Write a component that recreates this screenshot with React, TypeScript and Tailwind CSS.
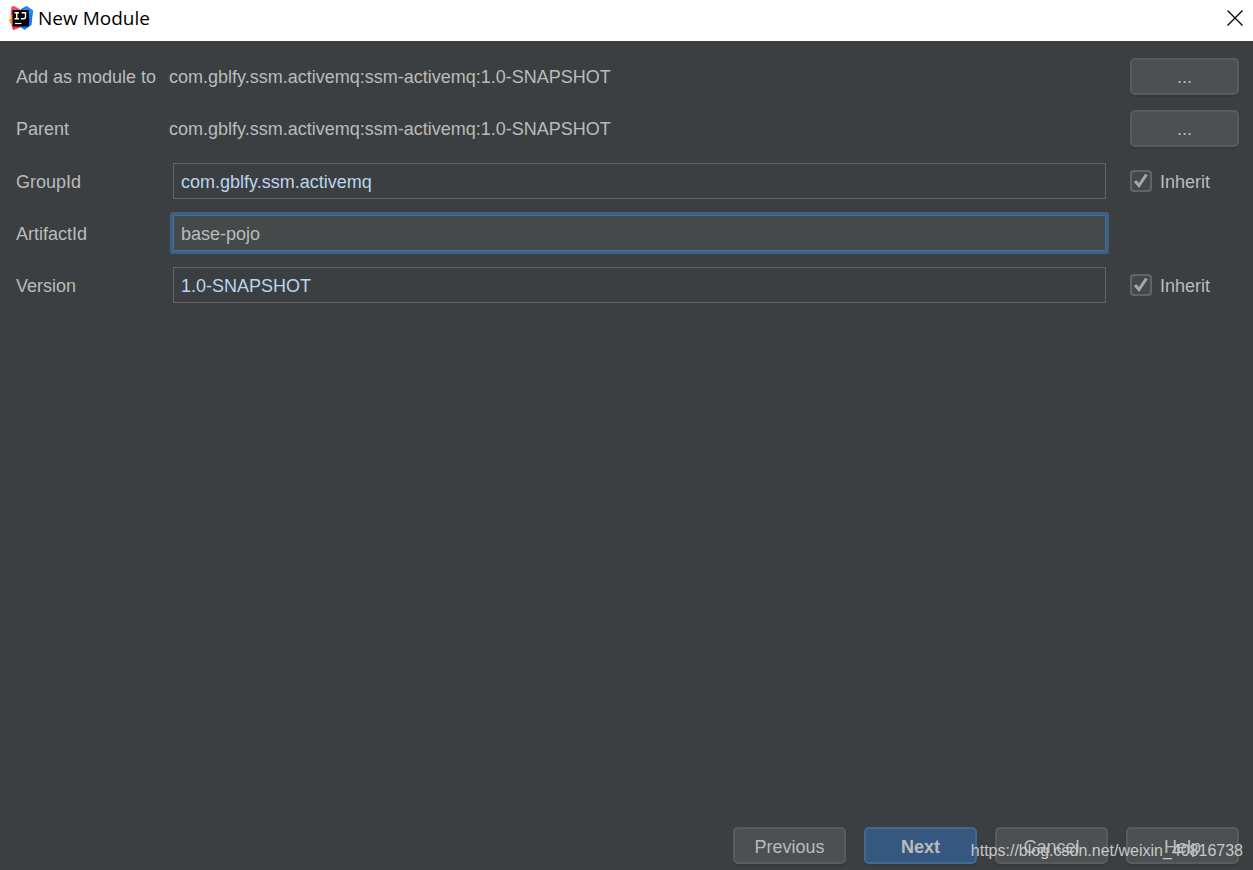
import React, { useState } from "react";

const PROJECT = "com.gblfy.ssm.activemq:ssm-activemq:1.0-SNAPSHOT";

const defaultModule = {
  groupId: "com.gblfy.ssm.activemq",
  artifactId: "base-pojo",
  version: "1.0-SNAPSHOT",
};

function Logo() {
  return (
    <svg className="size-6 shrink-0" viewBox="0 0 24 24" aria-hidden="true">
      <path d="M12 3 17.500 0 24 4.500 22.500 19 15.500 24 10 20z" fill="#087cfa" />
      <path d="M17.500 0 24 4.500 23.500 9 14 4z" fill="#1a8df8" />
      <path d="M2.500 0.500 5 0 14 5 12 21 4 24 2.500 19 4 12 1.500 8z" fill="#fe4468" />
      <path d="M1.500 9 5 11v8.500l-3-1L0 14.500l1.500-2z" fill="#fc8a35" />
      <path d="M3 19.500h12l-3 1.500-8 3z" fill="#fe315d" />
      <path d="M3.500 4h16.500v16.500h-16.500z" fill="#000" />
      <path
        d="M5.500 6.700h4.500M7.750 6.700v6M5.500 12.700h4.500M12.500 6.700h4v4q0 2-2 2h-2.500"
        fill="none"
        stroke="#fff"
        strokeWidth="1.400"
      />
      <path d="M6 17.500h6.500" stroke="#fff" strokeWidth="1.200" />
    </svg>
  );
}

function Button({
  children,
  className = "w-[113px]",
  primary = false,
  label,
}: {
  children: React.ReactNode;
  className?: string;
  primary?: boolean;
  label?: string;
}) {
  return (
    <button
      type="button"
      aria-label={label}
      className={`h-[37px] shrink-0 rounded-[5px] border-2 pt-0.5 shadow-[0_2px_1px_#36393b] ${
        primary
          ? "border-[#43698e] bg-[#365880] font-bold"
          : "border-[#585c5c] bg-[#4c5052]"
      } ${className}`}
    >
      {children}
    </button>
  );
}

function ProjectRow({ label }: { label: string }) {
  return (
    <div className="flex h-9 items-center">
      <span className="w-[153px] shrink-0 pt-0.5">{label}</span>
      <span className="flex-1 pt-0.5">{PROJECT}</span>
      <Button className="w-[109px]" label={`Choose ${label}`}>
        ...
      </Button>
    </div>
  );
}

function Inherit({ id }: { id: string }) {
  const [checked, setChecked] = useState(true);

  return (
    <label htmlFor={id} className="flex items-center gap-2">
      <span className="grid place-items-center">
        <input
          id={id}
          type="checkbox"
          checked={checked}
          onChange={({ target }) => setChecked(target.checked)}
          className="col-start-1 row-start-1 size-[22px] appearance-none rounded-[4px] border-2 border-[#626566] bg-[#43494a]"
        />
        {checked && (
          <svg
            className="pointer-events-none col-start-1 row-start-1 size-[22px]"
            viewBox="0 0 22 22"
            aria-hidden="true"
          >
            <path
              d="M5 11 9 15.500 16.500 4.500"
              fill="none"
              stroke="#a7a7a7"
              strokeWidth="3"
            />
          </svg>
        )}
      </span>
      <span className="pt-0.5">Inherit</span>
    </label>
  );
}

function FieldRow({
  id,
  label,
  value,
  onChange,
  active = false,
  inherit = false,
}: {
  id: string;
  label: string;
  value: string;
  onChange: (value: string) => void;
  active?: boolean;
  inherit?: boolean;
}) {
  return (
    <div className="flex h-9 items-center">
      <label htmlFor={id} className="w-[157px] shrink-0 pt-0.5">
        {label}
      </label>
      <input
        id={id}
        type="text"
        value={value}
        onChange={({ target }) => onChange(target.value)}
        className={`h-9 min-w-0 flex-1 px-[7px] pt-0.5 outline-none ${
          active
            ? "rounded-[1px] border border-[#466d94] bg-[#45494a] ring-3 ring-[#3d6185]"
            : "border border-[#646464] text-[#bbd5ee]"
        }`}
      />
      <div className="ml-6 w-[109px] shrink-0">
        {inherit && <Inherit id={`${id}-inherit`} />}
      </div>
    </div>
  );
}

export default function App() {
  const [module, setModule] = useState(defaultModule);

  return (
    <div className="relative flex min-h-screen flex-col bg-[#3c3f41] font-['Liberation_Sans',Arial,sans-serif] text-[18px] leading-6 text-[#bbbbbb]">
      <header className="flex h-[41px] items-center bg-white pr-[9px] pb-[5px] pl-[9px] text-black">
        <Logo />
        <h1 className="ml-[5px] flex-1 font-['Open_Sans','Segoe_UI',sans-serif] text-[19px]">
          New Module
        </h1>
        <button type="button" aria-label="Close">
          <svg className="size-[18px]" viewBox="0 0 18 18">
            <path
              d="M1.500 1.500l15 15M16.500 1.500l-15 15"
              stroke="#000"
              strokeWidth="1.300"
            />
          </svg>
        </button>
      </header>

      <main className="flex flex-1 flex-col gap-[17px] pt-[17px] pr-3.5 pl-4">
        <div className="flex flex-col gap-4">
          <ProjectRow label="Add as module to" />
          <ProjectRow label="Parent" />
        </div>
        <form className="flex flex-col gap-4">
          <FieldRow
            id="groupId"
            label="GroupId"
            value={module.groupId}
            onChange={(groupId) => setModule({ ...module, groupId })}
            inherit
          />
          <FieldRow
            id="artifactId"
            label="ArtifactId"
            value={module.artifactId}
            onChange={(artifactId) => setModule({ ...module, artifactId })}
            active
          />
          <FieldRow
            id="version"
            label="Version"
            value={module.version}
            onChange={(version) => setModule({ ...module, version })}
            inherit
          />
        </form>
      </main>

      <footer className="flex justify-end gap-[18px] pr-3.5 pb-1.5">
        <Button>Previous</Button>
        <Button primary>Next</Button>
        <Button>Cancel</Button>
        <Button>Help</Button>
      </footer>

      <span className="pointer-events-none absolute right-2.5 bottom-[7px] text-[16px] text-[#c8c8c8]">
        https://blog.csdn.net/weixin_40816738
      </span>
    </div>
  );
}
